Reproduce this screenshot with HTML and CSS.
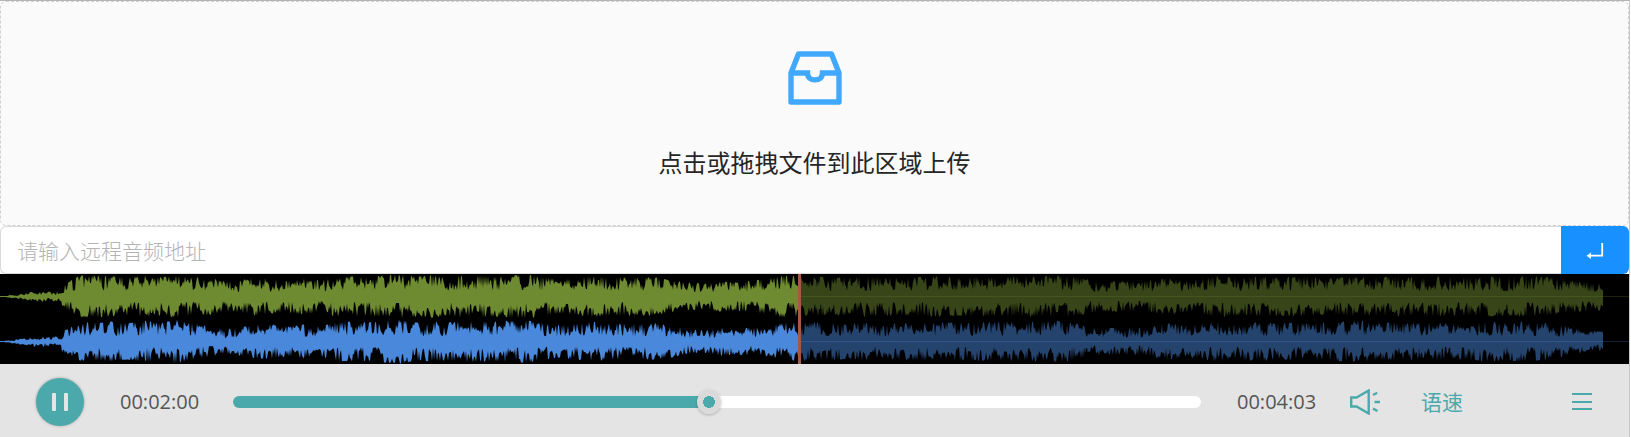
FILE: index.html
```html
<!DOCTYPE html>
<html lang="zh-CN">
<head>
<meta charset="utf-8">
<title>音频播放器</title>
<link rel="stylesheet" href="styles.css">
</head>
<body>
<main class="player">
  <button class="dropzone" type="button">
    <svg class="dropzone-icon" viewBox="0 0 54 54" fill="none" stroke="currentColor" stroke-width="5.4" stroke-linejoin="round" aria-hidden="true">
      <path d="M3 22V51H51V22L43.500 3H10.500Z"/>
      <path d="M3 22H19.500C19.500 26.400 22.800 28.900 27 28.900S34.500 26.400 34.500 22H51" stroke-linejoin="miter"/>
    </svg>
    <span class="dropzone-text">点击或拖拽文件到此区域上传</span>
  </button>

  <form class="remote">
    <input class="remote-input" type="text" placeholder="请输入远程音频地址" aria-label="请输入远程音频地址">
    <button class="remote-submit" type="button" aria-label="确定">
      <svg class="enter-icon" viewBox="0 0 18 18" aria-hidden="true">
        <path d="M16.200 2V14.700H4" fill="none" stroke="currentColor" stroke-width="1.800"/>
        <path d="M.5 14.700L5 11.500V17.900Z" fill="currentColor"/>
      </svg>
    </button>
  </form>

  <svg class="wave" viewBox="0 0 1629 90" preserveAspectRatio="none" aria-hidden="true">
    <path class="wave-left" id="wave-left"/>
    <path class="wave-right" id="wave-right"/>
    <rect class="wave-rest" x="799" y="0" width="830" height="90"/>
    <path class="wave-axis-left" d="M0 22.500H1629"/>
    <path class="wave-axis-right" d="M0 67.500H1629"/>
    <rect class="wave-cursor" x="798" y="0" width="3" height="90"/>
  </svg>

  <div class="controls">
    <button class="pause" type="button" aria-label="暂停">
      <svg class="pause-icon" viewBox="0 0 16 18" fill="currentColor" aria-hidden="true">
        <rect x="0" y="0" width="4" height="18" rx="1"/>
        <rect x="12" y="0" width="4" height="18" rx="1"/>
      </svg>
    </button>
    <span class="time">00:02:00</span>
    <input class="seek" type="range" min="0" max="1000" value="492" aria-label="播放进度">
    <span class="time">00:04:03</span>
    <button class="tool volume" type="button" aria-label="音量">
      <svg class="volume-icon" viewBox="0 0 30 26" fill="none" stroke="currentColor" stroke-width="2.400" aria-hidden="true">
        <path d="M1.200 8.500H6.500L18.700 1.500V24.500L6.500 17.500H1.200Z"/>
        <path d="M23 6L27.200 3.800M24.500 13H30M23 19.600L27.500 22"/>
      </svg>
    </button>
    <button class="tool speed" type="button">语速</button>
    <button class="tool menu" type="button" aria-label="播放列表">
      <svg class="menu-icon" viewBox="0 0 20 18" stroke="currentColor" stroke-width="2" aria-hidden="true">
        <path d="M0 1H20M0 9H20M0 16H20"/>
      </svg>
    </button>
  </div>
</main>
<script src="wave.js"></script>
</body>
</html>
```

FILE: styles.css
```css
* {
  box-sizing: border-box;
}

body {
  margin: 0;
  background: #fff;
  font-family: "Open Sans", "Noto Sans CJK SC", sans-serif;
}

button {
  padding: 0;
  border: 0;
  background: none;
  font: inherit;
  cursor: pointer;
}

svg {
  display: block;
}

.player {
  margin-right: 1px;
  border-top: 1px solid #b4b4b6;
  border-right: 1px solid #c8c8cc;
}

.dropzone {
  display: flex;
  flex-direction: column;
  align-items: center;
  gap: 40px;
  width: 100%;
  padding: 49px 16px 44px;
  border: 1px dashed #d0d0d0;
  border-radius: 6px;
  background: #fafafa;
}

.dropzone-icon {
  width: 54px;
  height: 54px;
  color: #40a9ff;
}

.dropzone-text {
  font-size: 24px;
  line-height: 36px;
  color: #262626;
}

.remote {
  display: flex;
  height: 48px;
}

.remote-input {
  flex: 1;
  min-width: 0;
  padding: 2px 16px 0;
  border: 1px solid #d9d9d9;
  border-right: 0;
  border-radius: 6px 0 0 6px;
  outline: 0;
  font: 21px "Open Sans", "Noto Sans CJK SC", sans-serif;
  color: #262626;
}

.remote-input::placeholder {
  color: #b4b4b4;
  font-weight: 300;
}

.remote-submit {
  display: flex;
  align-items: center;
  justify-content: center;
  width: 68px;
  border-radius: 0 6px 6px 0;
  background: #1890ff;
  color: #fff;
}

.enter-icon {
  width: 18px;
  height: 18px;
}

.wave {
  width: 100%;
  height: 90px;
  background: #000;
}

.wave-left {
  fill: #6e8b32;
}

.wave-right {
  fill: #4a88db;
}

.wave-rest {
  fill: #000;
  opacity: 0.5;
}

.wave-axis-left {
  stroke: #6e8b32;
  opacity: 0.25;
}

.wave-axis-right {
  stroke: #4a88db;
  opacity: 0.25;
}

.wave-cursor {
  fill: #a4584a;
}

.controls {
  display: flex;
  align-items: center;
  min-height: 73px;
  padding: 2px 37px 0 36px;
  background: #e4e4e4;
}

.pause {
  display: flex;
  align-items: center;
  justify-content: center;
  width: 48px;
  height: 48px;
  margin-right: 36px;
  border-radius: 50%;
  background: #4ba9ab;
  box-shadow: 0 0 3px rgba(0, 0, 0, 0.3);
  color: #e4e4e4;
}

.pause-icon {
  width: 16px;
  height: 18px;
}

.time {
  width: 77px;
  font-size: 20px;
  line-height: 28px;
  white-space: nowrap;
  color: #555;
}

.seek {
  flex: 1;
  min-width: 0;
  height: 24px;
  margin: 0 36px;
  background: none;
  appearance: none;
}

.seek::-webkit-slider-runnable-track {
  height: 12px;
  border-radius: 6px;
  background: linear-gradient(90deg, #4ba9ab 49%, #fff 49%);
}

.seek::-webkit-slider-thumb {
  width: 24px;
  height: 24px;
  margin-top: -6px;
  border-radius: 50%;
  background: radial-gradient(circle, #4ba9ab 6px, #dadada 6px);
  box-shadow: 0 1px 3px rgba(0, 0, 0, 0.25);
  appearance: none;
}

.tool {
  color: #4ba9ab;
}

.volume {
  margin-left: 36px;
}

.volume-icon {
  width: 30px;
  height: 26px;
}

.speed {
  margin-left: 41px;
  font-size: 21px;
  line-height: 28px;
}

.menu {
  margin-left: 109px;
}

.menu-icon {
  width: 20px;
  height: 18px;
}
```

FILE: wave.js
```js
// Peak loudness of each 16-unit stretch of the track, per channel.
const LEFT = [0, 2, 4, 4, 10, 19, 19, 18, 17, 19, 17, 19, 17, 17, 13, 14, 17, 15, 14, 16, 14, 18, 18, 17, 19, 20,
  18, 19, 17, 20, 19, 18, 19, 20, 17, 15, 16, 19, 17, 17, 17, 17, 14, 12, 11, 13, 12, 14, 16, 19, 18, 18, 17, 17,
  18, 17, 17, 17, 18, 18, 17, 18, 17, 18, 18, 18, 19, 18, 15, 13, 13, 13, 14, 17, 14, 15, 19, 17,
  17, 18, 17, 18, 17, 16, 17, 18, 17, 18, 17, 17, 18, 17, 17, 18, 17, 18, 18, 17, 14, 13, 12];
const RIGHT = [0, 2, 4, 4, 9, 17, 17, 18, 16, 19, 16, 20, 16, 14, 10, 12, 15, 15, 13, 15, 13, 17, 18, 17, 19, 20,
  17, 18, 17, 19, 18, 18, 19, 19, 16, 14, 16, 18, 16, 16, 16, 16, 14, 10, 9, 12, 11, 12, 13, 17, 17, 17, 17, 15,
  17, 14, 16, 17, 17, 17, 17, 17, 17, 18, 17, 18, 19, 17, 13, 11, 12, 11, 13, 16, 14, 15, 18, 16,
  17, 17, 16, 17, 16, 17, 18, 19, 17, 17, 16, 17, 17, 15, 17, 18, 17, 18, 17, 16, 13, 9, 8];
const LENGTH = 1604;

function noise(seed) {
  let state = seed;
  return () => {
    state = (state * 1664525 + 1013904223) >>> 0;
    return state / 4294967296;
  };
}

function edge(peaks, random) {
  const values = [];
  let swell = 0.7;
  let target = 0.8;
  for (let x = 0; x < LENGTH; x += 1) {
    if (x % 4 === 0) target = 0.3 + random() * 0.6;
    swell += (target - swell) * 0.5;
    const index = x / 16;
    const low = peaks[Math.floor(index)];
    const high = peaks[Math.min(Math.ceil(index), peaks.length - 1)];
    let peak = 2 + low + (high - low) * (index % 1);
    if (x < 62) peak = Math.min(5, x / 7);
    const spike = random() > 0.72 ? 0.25 + 0.5 * random() : 0;
    const level = swell + spike + (random() - 0.5) * 0.45;
    values.push(Math.max(0.4, peak * Math.min(1, Math.max(0.3, level))));
  }
  return values;
}

function draw(id, peaks, axis, seed) {
  const random = noise(seed);
  const top = edge(peaks, random);
  const bottom = edge(peaks, random);
  const upper = top.map((v, x) => `${x} ${(axis - v).toFixed(1)}`);
  const lower = bottom.map((v, x) => `${x} ${(axis + v).toFixed(1)}`).reverse();
  document.getElementById(id).setAttribute("d", `M${upper.concat(lower).join("L")}Z`);
}

draw("wave-left", LEFT, 22.5, 17);
draw("wave-right", RIGHT, 67.5, 91);
```
